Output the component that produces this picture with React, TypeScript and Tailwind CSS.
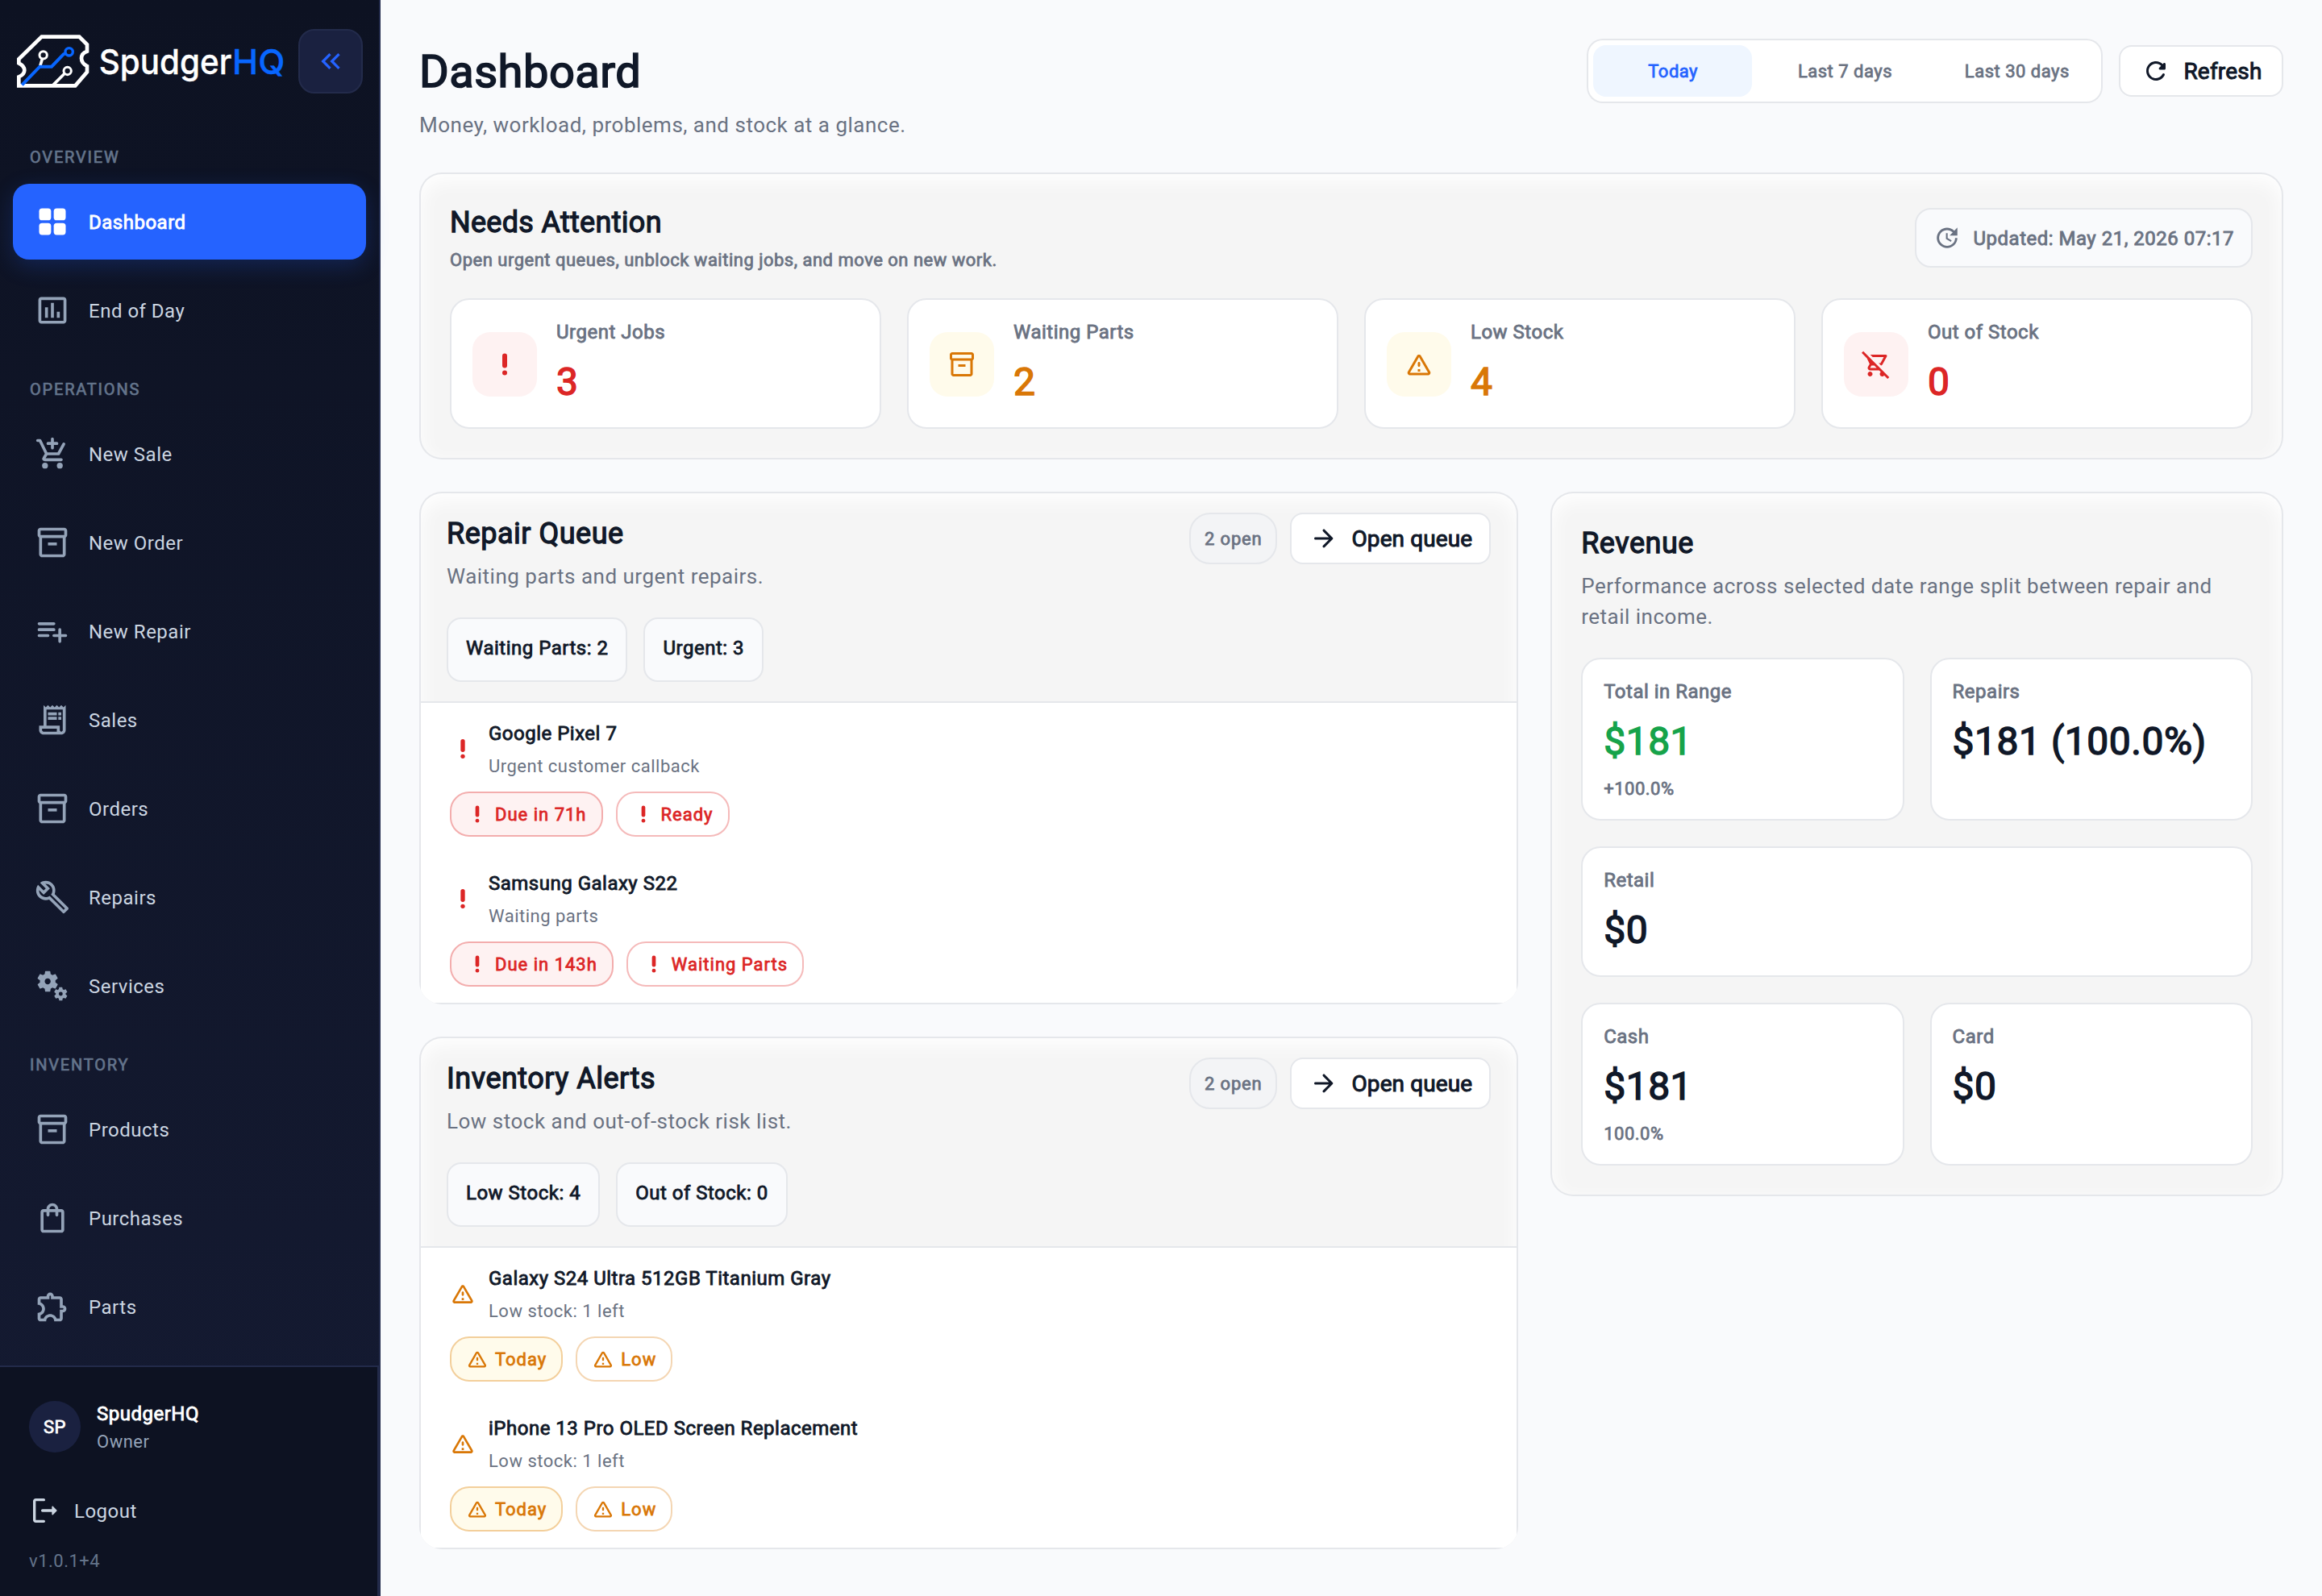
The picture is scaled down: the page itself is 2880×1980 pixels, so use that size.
import type { ReactNode } from "react";
import clsx from "clsx";
import {
    MdInsertChartOutlined,
    MdKeyboardDoubleArrowLeft,
    MdMiscellaneousServices,
    MdOutlineBuild,
    MdOutlineExtension,
    MdOutlineInventory2,
    MdOutlineReceiptLong,
    MdOutlineRemoveShoppingCart,
    MdOutlineShoppingBag,
    MdUpdate,
} from "react-icons/md";

type IconProps = {
    className?: string;
}

type Tone = "red" | "amber";

// medium weight used by headings and labels, has to sit on the element that sets the font size
const strong = "[-webkit-text-stroke:0.035em_currentColor]";
const strongLarge = "[-webkit-text-stroke:0.03em_currentColor]";


function GridIcon({ className }: IconProps) {
    return (
        <svg viewBox="0 0 24 24" fill="currentColor" className={className}>
            <rect x="3" y="3" width="8.1" height="8.1" rx="2" />
            <rect x="12.9" y="3" width="8.1" height="8.1" rx="2" />
            <rect x="3" y="12.9" width="8.1" height="8.1" rx="2" />
            <rect x="12.9" y="12.9" width="8.1" height="8.1" rx="2" />
        </svg>
    )
}

function AddCartIcon({ className }: IconProps) {
    return (
        <svg viewBox="0 0 24 24" fill="none" stroke="currentColor" strokeWidth="2" strokeLinecap="round" strokeLinejoin="round" className={className}>
            <path d="M12 2v6M9 5h6M2 3h1.6L8 12h8.1L19.7 5.4M8 12l-1.8 3c-.4.6 0 1 .8 1h11" />
            <circle cx="7" cy="20" r="2" fill="currentColor" stroke="none" />
            <circle cx="17" cy="20" r="2" fill="currentColor" stroke="none" />
        </svg>
    )
}

function PlaylistAddIcon({ className }: IconProps) {
    return (
        <svg viewBox="0 0 24 24" fill="none" stroke="currentColor" strokeWidth="2" strokeLinecap="round" className={className}>
            <path d="M3 7h10M3 11h10M3 15h6M13 15h8M17 11v8" />
        </svg>
    )
}

function LogoutIcon({ className }: IconProps) {
    return (
        <svg viewBox="0 0 24 24" fill="currentColor" className={className}>
            <path d="M5 5h6c.55 0 1-.45 1-1s-.45-1-1-1H5c-1.1 0-2 .9-2 2v14c0 1.1.9 2 2 2h6c.55 0 1-.45 1-1s-.45-1-1-1H5V5z" />
            <path d="M20.65 11.65l-2.79-2.79c-.32-.32-.86-.1-.86.35V11h-7c-.55 0-1 .45-1 1s.45 1 1 1h7v1.79c0 .45.54.67.85.35l2.79-2.79c.2-.19.2-.51.01-.7z" />
        </svg>
    )
}

function RefreshIcon({ className }: IconProps) {
    return (
        <svg viewBox="0 0 24 24" fill="currentColor" className={className}>
            <path d="M17.65 6.35c-1.63-1.63-3.94-2.57-6.48-2.31-3.67.37-6.69 3.35-7.1 7.02C3.52 15.91 7.27 20 12 20c3.19 0 5.93-1.87 7.21-4.56.32-.67-.16-1.44-.9-1.44-.37 0-.72.2-.88.53-1.13 2.43-3.84 3.97-6.8 3.31-2.22-.49-4.01-2.3-4.48-4.52C5.31 9.44 8.26 6 12 6c1.66 0 3.14.69 4.22 1.78l-1.51 1.51c-.63.63-.19 1.71.7 1.71H19c.55 0 1-.45 1-1V6.41c0-.89-1.08-1.34-1.71-.71l-.64.65z" />
        </svg>
    )
}

function ArrowIcon({ className }: IconProps) {
    return (
        <svg viewBox="0 0 24 24" fill="currentColor" className={className}>
            <path d="M5 13h11.17l-4.88 4.88c-.39.39-.39 1.03 0 1.42.39.39 1.02.39 1.41 0l6.59-6.59c.39-.39.39-1.02 0-1.41l-6.58-6.6c-.39-.39-1.02-.39-1.41 0-.39.39-.39 1.02 0 1.41L16.17 11H5c-.55 0-1 .45-1 1s.45 1 1 1z" />
        </svg>
    )
}

function UrgentIcon({ className }: IconProps) {
    return (
        <svg viewBox="0 0 24 24" fill="currentColor" className={className}>
            <rect x="10" y="3" width="4" height="12" rx="2" />
            <circle cx="12" cy="19" r="2" />
        </svg>
    )
}

function WarningIcon({ className }: IconProps) {
    return (
        <svg viewBox="0 0 24 24" fill="currentColor" className={className}>
            <path d="M12 5.99 19.53 19H4.47L12 5.99M2.74 18c-.77 1.33.19 3 1.73 3h15.06c1.54 0 2.5-1.67 1.73-3L13.73 4.99c-.77-1.33-2.69-1.33-3.46 0L2.74 18zM11 11v2c0 .55.45 1 1 1s1-.45 1-1v-2c0-.55-.45-1-1-1s-1 .45-1 1zm0 5h2v2h-2z" />
        </svg>
    )
}

function Logo() {
    return (
        <svg viewBox="0 0 1050 270" className="h-[90px] w-[350px]">
            <g fill="none" stroke="#fff" strokeWidth="14">
                <path d="M125 47H265L294 76V101C279 106 273 114 273 127C273 141 280 149 294 156V178L250 229H40V196C54 190 61 182 61 171C61 160 53 152 40 145V130Z" />
                <path d="M127 130L119 157M211 183L168 226" strokeWidth="11" />
                <circle cx="131" cy="115" r="14" strokeWidth="9" />
                <circle cx="221" cy="174" r="14" strokeWidth="9" />
            </g>
            <g fill="none" stroke="#0866ff" strokeWidth="12">
                <path d="M52 226L118 158H162L206 112L215 108" />
                <circle cx="227" cy="103" r="14" strokeWidth="10" />
            </g>
            <g className="font-['Inter',sans-serif] text-[129px] font-medium tracking-normal [stroke-width:1px]">
                <text x="338" y="185" textLength="494" lengthAdjust="spacingAndGlyphs" className="fill-white stroke-white">Spudger</text>
                <text x="834" y="185" textLength="196" lengthAdjust="spacingAndGlyphs" className="fill-[#0866ff] stroke-[#0866ff]">HQ</text>
            </g>
        </svg>
    )
}


const sections = [
    {
        title: "OVERVIEW",
        items: [
            { label: "Dashboard", icon: GridIcon, active: true },
            { label: "End of Day", icon: MdInsertChartOutlined },
        ],
    },
    {
        title: "OPERATIONS",
        items: [
            { label: "New Sale", icon: AddCartIcon },
            { label: "New Order", icon: MdOutlineInventory2 },
            { label: "New Repair", icon: PlaylistAddIcon },
            { label: "Sales", icon: MdOutlineReceiptLong },
            { label: "Orders", icon: MdOutlineInventory2 },
            { label: "Repairs", icon: MdOutlineBuild },
            { label: "Services", icon: MdMiscellaneousServices },
        ],
    },
    {
        title: "INVENTORY",
        items: [
            { label: "Products", icon: MdOutlineInventory2 },
            { label: "Purchases", icon: MdOutlineShoppingBag },
            { label: "Parts", icon: MdOutlineExtension },
        ],
    },
]

function Sidebar() {
    return (
        <aside className="flex w-[472px] shrink-0 flex-col border-r-2 border-[#222a4a] bg-linear-to-b from-[#0d1222] to-[#151b33]">
            <div className="flex h-[144px] items-start justify-between pt-[30px] pr-5 pl-[10px]">
                <Logo />
                <button className="mt-1.5 flex size-20 items-center justify-center rounded-[20px] border-2 border-[#232b4b] bg-[#1a2140] text-[#2563ff]">
                    <MdKeyboardDoubleArrowLeft className="size-10" />
                </button>
            </div>

            <nav className="flex-1">
                {sections.map((section) => (
                    <div key={section.title}>
                        <h3 className={`px-[37px] pt-[37px] pb-[19px] text-[20px] leading-7 tracking-[1.8px] text-[#64748b] ${strong}`}>
                            {section.title}
                        </h3>
                        <ul className="flex flex-col gap-4 px-4">
                            {section.items.map(({ label, icon: Icon, active }: { label: string, icon: any, active?: boolean }) => (
                                <li
                                    key={label}
                                    className={clsx(
                                        "flex h-[94px] items-center gap-[23px] rounded-[20px] pl-[27px] text-[24px]",
                                        active ? `bg-[#2563ff] text-white shadow-[0_8px_28px_rgba(37,99,255,0.22)] ${strong}` : "text-[#cbd5e1]"
                                    )}
                                >
                                    <Icon className={clsx("size-11", !active && "text-[#94a3b8]")} />
                                    <span className="pt-0.5">{label}</span>
                                </li>
                            ))}
                        </ul>
                    </div>
                ))}
            </nav>

            <div className="h-[286px] border-t-2 border-r-2 border-[#222a4a] bg-[#0d1222] px-9 pt-[41px]">
                <div className="flex items-center gap-5">
                    <div className={`mb-0.5 flex size-16 items-center justify-center rounded-full bg-[#1a2140] text-[22px] text-white ${strong}`}>SP</div>
                    <div className="leading-[34px]">
                        <p className={`text-[24px] text-white ${strong}`}>SpudgerHQ</p>
                        <p className="pt-px text-[22px] leading-[33px] text-[#94a3b8]">Owner</p>
                    </div>
                </div>
                <button className="mt-[49px] flex items-center gap-4 text-[24px] text-[#cbd5e1]">
                    <LogoutIcon className="size-10" />
                    <span className="pt-0.5">Logout</span>
                </button>
                <p className="mt-[29px] text-[22px] leading-7 text-[#64748b]">v1.0.1+4</p>
            </div>
        </aside>
    )
}


// the border is an inset shadow, so the white list in a queue card runs over it in the bottom corners
function Panel({ className, children }: { className?: string, children: ReactNode }) {
    return (
        <section className={clsx("overflow-hidden rounded-[28px] bg-[#f5f5f5] shadow-[inset_0_0_0_2px_#e5e7eb,inset_0_8px_24px_2px_#fff]", className)}>
            {children}
        </section>
    )
}

const metrics: { label: string, value: number, tone: Tone, icon: any }[] = [
    { label: "Urgent Jobs", value: 3, tone: "red", icon: UrgentIcon },
    { label: "Waiting Parts", value: 2, tone: "amber", icon: MdOutlineInventory2 },
    { label: "Low Stock", value: 4, tone: "amber", icon: WarningIcon },
    { label: "Out of Stock", value: 0, tone: "red", icon: MdOutlineRemoveShoppingCart },
]

function NeedsAttention() {
    return (
        <Panel className="mt-[39px] p-[38px]">
            <div className="flex h-[118px] items-start justify-between">
                <div>
                    <h2 className={`mt-0.5 text-[36px] leading-11 tracking-[0.3px] text-gray-900 ${strong}`}>Needs Attention</h2>
                    <p className={`mt-[9px] text-[22px] leading-8 text-gray-500 ${strong}`}>
                        Open urgent queues, unblock waiting jobs, and move on new work.
                    </p>
                </div>
                <div className={`mt-1.5 flex h-[74px] items-center gap-4 rounded-[20px] border-2 border-gray-200 bg-[#f9fafc] px-[21px] text-[24px] text-gray-500 ${strong}`}>
                    <MdUpdate className="size-[34px]" strokeWidth={0} />
                    <span className="pt-0.5">Updated: May 21, 2026 07:17</span>
                </div>
            </div>
            <div className="grid grid-cols-4 gap-8">
                {metrics.map(({ label, value, tone, icon: Icon }) => (
                    <div key={label} className="flex items-center gap-6 rounded-[24px] border-2 border-gray-200 bg-white px-[26px] pt-[26px] pb-6">
                        <div className={clsx("flex size-20 items-center justify-center rounded-[22px]", tone === "red" ? "bg-[#fef2f2] text-[#dc2626]" : "bg-[#fffbeb] text-[#d97706]")}>
                            <Icon className="mb-px size-9" />
                        </div>
                        <div>
                            <p className={`text-[24px] leading-7 text-gray-500 ${strong}`}>{label}</p>
                            <p className={clsx("mt-4 text-[48px] leading-16", strongLarge, tone === "red" ? "text-[#dc2626]" : "text-[#d97706]")}>{value}</p>
                        </div>
                    </div>
                ))}
            </div>
        </Panel>
    )
}

type QueueProps = {
    title: string;
    subtitle: string;
    counts: string[];
    tone: Tone;
    rows: { name: string, note: string, tags: string[] }[];
}

function QueueCard({ title, subtitle, counts, tone, rows }: QueueProps) {

    const Icon = tone === "red" ? UrgentIcon : WarningIcon;

    return (
        <Panel className="p-0.5">
            <div className="border-b-2 border-gray-200 px-8 py-6">
                <div className="flex items-start justify-between">
                    <div>
                        <h2 className={`mt-1 text-[36px] leading-11 text-gray-900 ${strong}`}>{title}</h2>
                        <p className="mt-[11px] text-[26px] leading-10 text-gray-500">{subtitle}</p>
                    </div>
                    <div className="flex h-16 gap-4">
                        <span className={`flex items-center rounded-[26px] border-2 border-gray-200 bg-gray-100 px-[17px] text-[22px] tracking-[0.8px] text-gray-500 ${strong}`}>2 open</span>
                        <button className={`flex items-center gap-4 rounded-[16px] border-2 border-gray-200 bg-white pr-[21px] pl-[22px] text-[28px] tracking-[0.1px] text-gray-900 ${strong}`}>
                            <ArrowIcon className="size-9" />
                            <span className="pt-0.5">Open queue</span>
                        </button>
                    </div>
                </div>
                <div className="mt-[31px] flex gap-5">
                    {counts.map((count) => (
                        <span key={count} className={`h-20 rounded-[18px] border-2 border-gray-200 bg-[#f9fafc] px-[22px] text-[24px] leading-[72px] text-gray-900 ${strong}`}>{count}</span>
                    ))}
                </div>
            </div>

            <ul className="flex flex-col gap-[38px] bg-white px-9 pt-[18px] pb-5">
                {rows.map((row) => (
                    <li key={row.name}>
                        <div className="flex items-center gap-4">
                            <Icon className={clsx("mb-0.5 size-8", tone === "red" ? "text-[#dc2626]" : "text-[#d97706]")} />
                            <div className="leading-10">
                                <p className={`text-[24px] text-gray-900 ${strong}`}>{row.name}</p>
                                <p className="pt-px text-[22px] leading-[39px] text-gray-500">{row.note}</p>
                            </div>
                        </div>
                        <div className="mt-3 flex gap-4">
                            {row.tags.map((tag, i) => (
                                <span
                                    key={tag}
                                    className={clsx(
                                        "flex h-14 items-center gap-2 rounded-[24px] border-2 px-[18px] text-[22px] tracking-[1px]",
                                        strong,
                                        tone === "red" ? "text-[#dc2626]" : "text-[#d97706]",
                                        tone === "red" && (i === 0 ? "border-[#f3adad] bg-[#fef2f2]" : "border-[#f5baba]"),
                                        tone === "amber" && (i === 0 ? "border-[#f3cf9b] bg-[#fffbeb]" : "border-[#f4d6b3]")
                                    )}
                                >
                                    <Icon className="size-7" />
                                    {tag}
                                </span>
                            ))}
                        </div>
                    </li>
                ))}
            </ul>
        </Panel>
    )
}

type StatProps = {
    label: string;
    value: string;
    note?: string;
    className?: string;
    green?: boolean;
}

function Stat({ label, value, note, className, green }: StatProps) {
    return (
        <div className={clsx("rounded-[24px] border-2 border-gray-200 bg-white px-[26px] pt-[26px] pb-6 text-gray-500", className)}>
            <p className={`text-[24px] leading-7 ${strong}`}>{label}</p>
            <p className={clsx("mt-4 text-[48px] leading-16", strongLarge, green ? "text-[#16a34a]" : "text-gray-900")}>{value}</p>
            {note && <p className={`mt-[13px] text-[22px] leading-[27px] ${strong}`}>{note}</p>}
        </div>
    )
}

function Revenue() {
    return (
        <Panel className="p-[38px]">
            <div className="h-[168px] pt-1">
                <h2 className={`text-[36px] leading-11 text-gray-900 ${strong}`}>Revenue</h2>
                <p className="mt-3 text-[26px] leading-[38px] text-gray-500">
                    Performance across selected date range split between repair and retail income.
                </p>
            </div>
            <div className="grid grid-cols-2 gap-8">
                <Stat label="Total in Range" value="$181" note="+100.0%" green />
                <Stat label="Repairs" value="$181 (100.0%)" />
                <Stat label="Retail" value="$0" className="col-span-2" />
                <Stat label="Cash" value="$181" note="100.0%" />
                <Stat label="Card" value="$0" />
            </div>
        </Panel>
    )
}


export default function App() {
    return (
        <div className="flex h-[1980px] w-[2880px] overflow-hidden bg-[#f9fafc] font-['Roboto',sans-serif] tracking-[0.5px]">
            <Sidebar />

            <main className="flex-1 px-12 pt-12">
                <header>
                    <div className="flex h-20 items-center justify-between">
                        <h1 className={`mt-0.5 text-[56px] leading-none text-gray-900 ${strongLarge}`}>Dashboard</h1>
                        <div className="flex items-center gap-5">
                            <div className="grid h-20 w-[640px] grid-cols-3 rounded-[20px] bg-white text-[22px] text-gray-500 inset-ring-2 inset-ring-gray-200">
                                {["Today", "Last 7 days", "Last 30 days"].map((range, i) => (
                                    <div key={range} className="p-2">
                                        <button className={clsx("size-full rounded-[16px] pl-px text-[22px]", strong, i === 0 && "bg-[#eff6ff] text-[#2563ff]")}>{range}</button>
                                    </div>
                                ))}
                            </div>
                            <button className={`flex h-16 w-[204px] items-center justify-center gap-4 rounded-[16px] border-2 border-gray-200 bg-white pl-0.5 text-[28px] tracking-[0.2px] text-gray-900 ${strong}`}>
                                <RefreshIcon className="size-9" />
                                <span className="pt-0.5">Refresh</span>
                            </button>
                        </div>
                    </div>
                    <p className="mt-[7px] text-[26px] leading-10 text-gray-500">Money, workload, problems, and stock at a glance.</p>
                </header>

                <NeedsAttention />

                <div className="mt-10 grid grid-cols-[3fr_2fr] items-start gap-10">
                    <div className="flex flex-col gap-10">
                        <QueueCard
                            title="Repair Queue"
                            subtitle="Waiting parts and urgent repairs."
                            counts={["Waiting Parts: 2", "Urgent: 3"]}
                            tone="red"
                            rows={[
                                { name: "Google Pixel 7", note: "Urgent customer callback", tags: ["Due in 71h", "Ready"] },
                                { name: "Samsung Galaxy S22", note: "Waiting parts", tags: ["Due in 143h", "Waiting Parts"] },
                            ]}
                        />
                        <QueueCard
                            title="Inventory Alerts"
                            subtitle="Low stock and out-of-stock risk list."
                            counts={["Low Stock: 4", "Out of Stock: 0"]}
                            tone="amber"
                            rows={[
                                { name: "Galaxy S24 Ultra 512GB Titanium Gray", note: "Low stock: 1 left", tags: ["Today", "Low"] },
                                { name: "iPhone 13 Pro OLED Screen Replacement", note: "Low stock: 1 left", tags: ["Today", "Low"] },
                            ]}
                        />
                    </div>
                    <Revenue />
                </div>
            </main>
        </div>
    )
}
